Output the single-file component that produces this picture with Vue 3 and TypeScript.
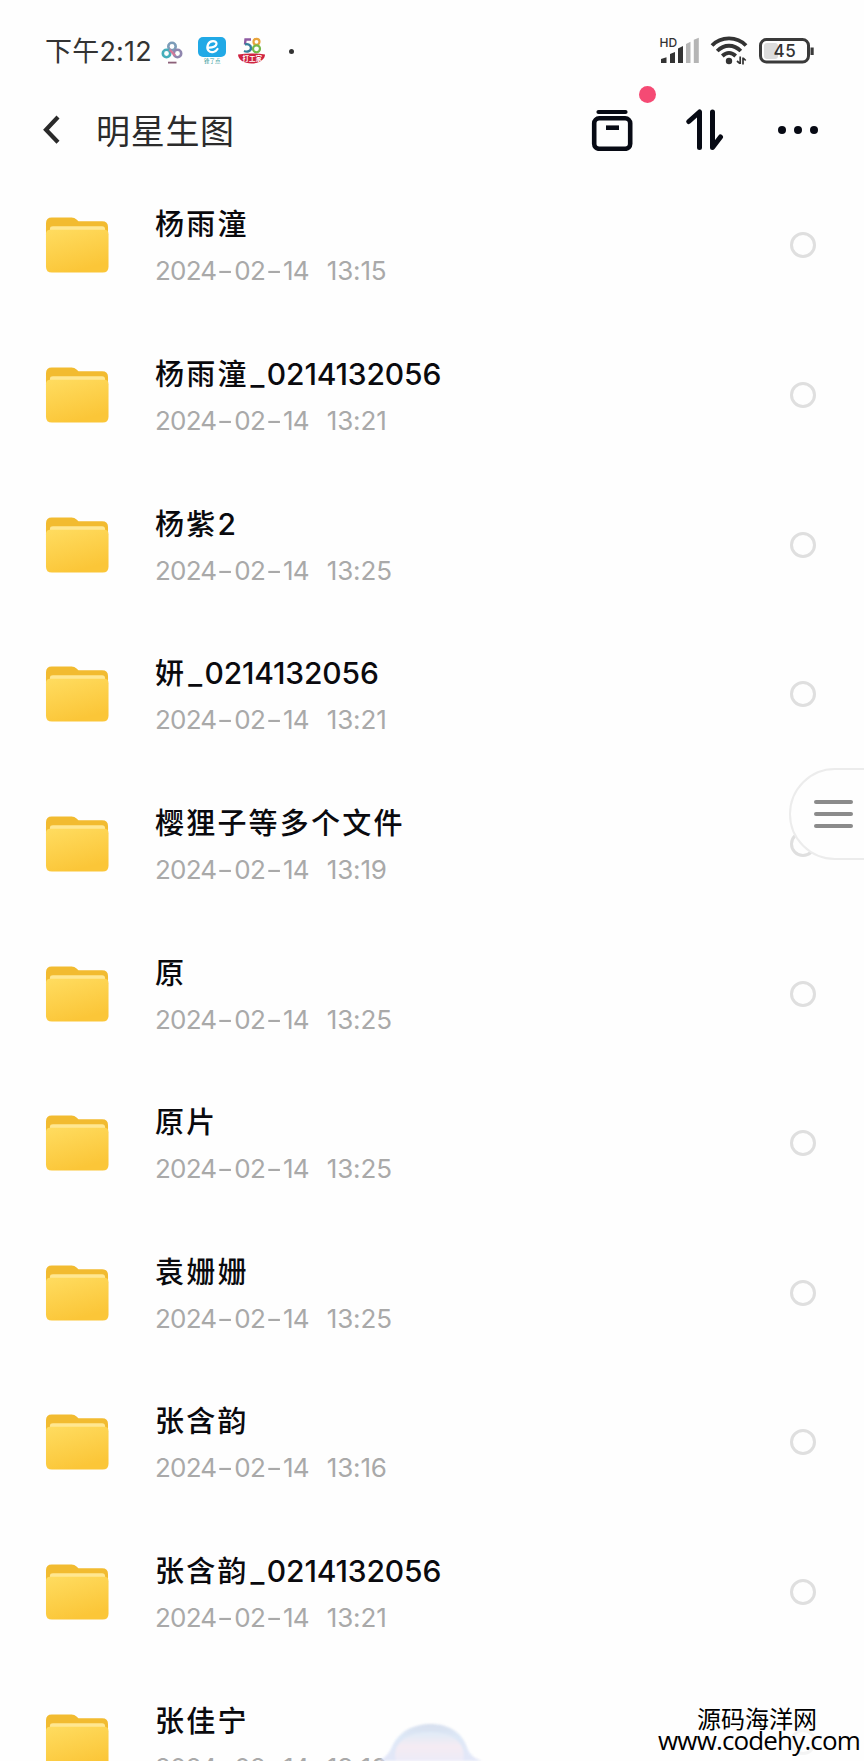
<script setup lang="ts">
interface Entry {
  name: string
  serial?: string
  digits?: string
  time: string
}

const day = ['2024', '-', '02', '-', '14']

const entries: Entry[] = [
  { name: '杨雨潼', time: '13:15' },
  { name: '杨雨潼', serial: '0214132056', time: '13:21' },
  { name: '杨紫', digits: '2', time: '13:25' },
  { name: '妍', serial: '0214132056', time: '13:21' },
  { name: '樱狸子等多个文件', time: '13:19' },
  { name: '原', time: '13:25' },
  { name: '原片', time: '13:25' },
  { name: '袁姗姗', time: '13:25' },
  { name: '张含韵', time: '13:16' },
  { name: '张含韵', serial: '0214132056', time: '13:21' },
  { name: '张佳宁', time: '13:16' },
]
</script>

<template>
  <div class="screen">
    <svg class="defs" width="0" height="0" aria-hidden="true">
      <defs>
        <linearGradient id="folderFront" x1="0" y1="0" x2="0.4" y2="1">
          <stop offset="0" stop-color="#ffdc60" />
          <stop offset="1" stop-color="#fbc638" />
        </linearGradient>
        <linearGradient id="orb" x1="0" y1="0" x2="0" y2="1">
          <stop offset="0" stop-color="#d3dced" />
          <stop offset="0.35" stop-color="#dae6f6" />
          <stop offset="1" stop-color="#e1e5f8" />
        </linearGradient>
        <linearGradient id="orbGlow" x1="0" y1="0" x2="0" y2="1">
          <stop offset="0" stop-color="#dde9f8" />
          <stop offset="0.5" stop-color="#f4e9f2" />
          <stop offset="1" stop-color="#ebe9f8" />
        </linearGradient>
      </defs>
    </svg>

    <header class="status">
      <span class="clock"><span class="clock-cn">下午</span>2:12</span>
      <svg class="app-cloud" width="22" height="24" viewBox="0 0 22 24" fill="none">
        <circle cx="11" cy="6.5" r="3.700" stroke="#7c9cb8" stroke-width="2.600" />
        <circle cx="5.500" cy="13.500" r="3.700" stroke="#45aebb" stroke-width="2.600" />
        <circle cx="16.500" cy="13.500" r="3.700" stroke="#8f86ae" stroke-width="2.600" />
        <path d="M8.500 9.500l5.500 6" stroke="#d4789a" stroke-width="2.400" />
        <path d="M7 22.600h8.500" stroke="#8c6079" stroke-width="1.800" />
      </svg>
      <svg class="app-e" width="30" height="28" viewBox="0 0 30 28" fill="none">
        <rect x="1" y="1" width="28" height="20" rx="5" fill="#21a9e6" />
        <path d="M10.500 11.500c5 .6 9-1.200 9-4 0-3-6.500-3.500-8.500 1-2.200 5.200 1.500 8.500 5.500 7.500 1.800-.4 3.200-1.600 4-3" stroke="#fff" stroke-width="2.200" stroke-linecap="round" />
        <text x="7" y="26.500" class="e-label">锋了点</text>
      </svg>
      <svg class="app-58" width="30" height="30" viewBox="0 0 30 30" fill="none">
        <path d="M14 3.500H8.500L8 8.500" stroke="#8e5aa2" stroke-width="2.400" />
        <path d="M8 8.500c3-1 6 .5 6 3.500s-3.500 4.500-7 3" stroke="#377f9c" stroke-width="2.400" />
        <circle cx="19.500" cy="5.800" r="3" stroke="#e9a43b" stroke-width="2.200" />
        <circle cx="19.500" cy="12.800" r="3.500" stroke="#76b84a" stroke-width="2.200" />
        <path d="M1 18.500q13.500-2 27 0c0 5-6 9-13.500 9S1 23.500 1 18.500z" fill="#cf2340" />
        <text x="5.500" y="24.800" class="work-label">打工家</text>
      </svg>
      <span class="more-dot"></span>
      <span class="spacer"></span>
      <svg class="signal" width="42" height="30" viewBox="0 0 42 30">
        <text x="0.500" y="11" class="hd">HD</text>
        <path d="M2 23l5.500-1.800V27H2z" fill="#333" />
        <path d="M11 18l5-2V27h-5z" fill="#333" />
        <path d="M19 12.500l5-2.500v17h-5z" fill="#333" />
        <path d="M27 8l4.500-2.200V27H27z" fill="#b5b5b5" />
        <path d="M34.800 3.800l5-2V27h-5z" fill="#b5b5b5" />
      </svg>
      <svg class="wifi" width="38" height="30" viewBox="0 0 38 30" fill="none" stroke="#333" stroke-width="3.800">
        <path d="M2 9.500C11 0 27 0 36 9.500" />
        <path d="M7.200 15c7-7 16.600-7 23.600 0" />
        <path d="M12.300 20c4.200-4 9.200-4 13.400 0" />
        <circle cx="19" cy="25" r="3.200" fill="#333" stroke="none" />
        <path d="M30.200 20.500V28M27 25l3 2.700M33 28.500v-7M33.200 22l2.500 2.500" stroke-width="1.700" />
      </svg>
      <svg class="battery" width="56" height="26" viewBox="0 0 56 26">
        <rect x="5" y="5" width="14" height="16" rx="3" fill="#dcdcdc" />
        <rect x="1.500" y="1.500" width="48" height="22.500" rx="6" fill="none" stroke="#3a3a3a" stroke-width="3" />
        <path d="M51.500 9.500h3.200v7.500h-3.200z" fill="#3a3a3a" />
        <text x="14.500" y="19.200" class="level">45</text>
      </svg>
    </header>

    <nav class="bar">
      <svg class="back" width="20" height="32" viewBox="0 0 20 32" fill="none">
        <path d="M17 3L5 15.700l12 12.500" stroke="#2a2a2a" stroke-width="4.200" />
      </svg>
      <h1 class="title">明星生图</h1>
      <span class="spacer"></span>
      <span class="box-wrap">
        <svg width="42" height="42" viewBox="0 0 42 42" fill="none" stroke="#070a14">
          <path d="M7.500 3H34.500" stroke-width="4.200" stroke-linecap="round" />
          <rect x="3.200" y="9.300" width="36" height="30.500" rx="5" stroke-width="4.600" />
          <path d="M15 18.700h13" stroke-width="4.600" />
        </svg>
        <i class="badge"></i>
      </span>
      <svg class="sort" width="38" height="42" viewBox="0 0 38 42" fill="none" stroke="#070a14" stroke-width="5" stroke-linecap="round" stroke-linejoin="round">
        <path d="M2.800 12.500L13.500 3V38.500" />
        <path d="M26.500 3V38.500l8-10.500" />
      </svg>
      <span class="dots"><i></i><i></i><i></i></span>
    </nav>

    <main class="list">
      <section v-for="(entry, i) in entries" :key="i" class="row">
        <svg class="folder" width="65" height="58" viewBox="0 0 66 58">
          <path d="M1 10V7q0-6 6-6h20q3 0 5 2l2 2h24q6 0 6 6v20H1z" fill="#f2bb30" />
          <path d="M5 12.500q0-2.500 3-2.500h50q3 0 3 3v4H5z" fill="#ffe791" />
          <path d="M1 18q0-4.500 4.500-4.500H60q4.500 0 4.500 4.500v33q0 6-6 6H7q-6 0-6-6z" fill="url(#folderFront)" />
        </svg>
        <div class="info">
          <div class="name">{{ entry.name }}<span v-if="entry.digits" class="latin">{{ entry.digits }}</span><span v-if="entry.serial" class="latin serial"><span class="joiner">_</span>{{ entry.serial }}</span></div>
          <div class="date">
            <span v-for="(part, p) in day" :key="p" :class="part === '-' ? 'dash' : 'num'">{{ part }}</span>
            <span class="time">{{ entry.time }}</span>
          </div>
        </div>
        <span class="radio" :class="{ faint: i === entries.length - 1 }"></span>
      </section>
    </main>

    <div class="drawer"><i></i><i></i><i></i></div>

    <svg class="orb" width="110" height="38" viewBox="0 0 110 38">
      <path d="M0 38q8-3 13-12C20 8 36 1 53 1s32 8 37 26q4 8 14 11z" fill="url(#orb)" />
      <path d="M18 38C13 20 30 9 52 9s37 11 33 29z" fill="url(#orbGlow)" />
    </svg>

    <footer class="mark">
      <div class="mark-cn">源码海洋网</div>
      <div class="mark-url">www.codehy.com</div>
    </footer>
  </div>
</template>

<style>
body {
  background: #fefefe;
}
</style>

<style scoped>
.screen {
  position: relative;
  width: 864px;
  height: 1761px;
  overflow: hidden;
  background: #fefefe;
  font-family: Inter, "Noto Sans CJK SC", sans-serif;
}
.defs {
  position: absolute;
}
.spacer {
  flex: 1;
}
.status {
  display: flex;
  align-items: center;
  height: 100px;
  padding: 0 49px 0 45px;
  box-sizing: border-box;
}
.clock {
  width: 106px;
  margin-top: -1px;
  font-size: 27px;
  letter-spacing: 0.2px;
  color: #333;
  white-space: nowrap;
}
.clock-cn {
  font-family: "Noto Sans CJK SC", sans-serif;
  font-size: 27px;
}
.app-cloud {
  margin: 4px 0 0 10px;
}
.app-e {
  margin-left: 14px;
}
.e-label {
  font: 5.5px "Noto Sans CJK SC", sans-serif;
  fill: #389b9b;
}
.app-58 {
  margin: 2px 0 0 10px;
}
.work-label {
  font: bold 6.5px "Noto Sans CJK SC", sans-serif;
  fill: #fff;
}
.more-dot {
  width: 5px;
  height: 5px;
  margin: 2px 0 0 22px;
  border-radius: 50%;
  background: #333;
}
.signal {
  margin-top: 2px;
}
.hd {
  font: 500 12px Inter, sans-serif;
  fill: #333;
}
.wifi {
  margin: 2px 0 0 9px;
}
.battery {
  margin: 1px 0 0 11px;
}
.level {
  font: 500 17px Inter, sans-serif;
  letter-spacing: 0.5px;
  fill: #333;
}
.bar {
  display: flex;
  align-items: center;
  height: 60px;
  padding: 0 46px 0 41px;
}
.title {
  margin: -1px 0 0 35px;
  font: 400 34px/60px "Noto Sans CJK SC", sans-serif;
  letter-spacing: 0.7px;
  color: #2b2b2b;
}
.box-wrap {
  position: relative;
  height: 42px;
}
.badge {
  position: absolute;
  top: -23.5px;
  left: 47.5px;
  width: 17px;
  height: 17px;
  border-radius: 50%;
  background: #f54a74;
}
.sort {
  margin-left: 53px;
}
.dots {
  display: flex;
  gap: 7.5px;
  margin-left: 53.5px;
}
.dots i {
  width: 8.5px;
  height: 8.5px;
  border-radius: 50%;
  background: #070a14;
}
.list {
  padding-top: 10.5px;
}
.row {
  display: flex;
  align-items: center;
  height: 149.65px;
  padding: 0 48px 0 45px;
}
.folder {
  flex: none;
}
.info {
  flex: 1;
  margin: 4px 0 0 45px;
}
.name {
  height: 48px;
  font: 500 29px/46px "Noto Sans CJK SC", sans-serif;
  letter-spacing: 2.2px;
  color: #0a0a0e;
}
.latin {
  font-family: Inter, sans-serif;
  font-size: 30px;
  line-height: 1;
  letter-spacing: 0.1px;
}
.serial {
  letter-spacing: -0.15px;
}
.joiner {
  margin: 0 2.5px 0 2px;
}
.date {
  display: flex;
  height: 48px;
  font: 400 26px/48px Inter, sans-serif;
  letter-spacing: -0.8px;
  color: #a9a9a9;
}
.dash {
  width: 17px;
  margin: 0 1px 0 0;
  text-align: center;
  transform: scaleX(1.4);
}
.time {
  margin-left: 18px;
  letter-spacing: -0.15px;
}
.radio {
  width: 20px;
  height: 20px;
  border: 3px solid #dfdfdf;
  border-radius: 50%;
}
.faint {
  opacity: 0.3;
}
.drawer {
  position: absolute;
  top: 768px;
  right: -20px;
  display: flex;
  flex-direction: column;
  justify-content: center;
  gap: 7.5px;
  width: 95px;
  height: 92px;
  padding-left: 23px;
  box-sizing: border-box;
  border: 2px solid #ececec;
  border-radius: 46px 0 0 46px;
  background: #fefefe;
}
.drawer i {
  width: 39px;
  height: 4.5px;
  border-radius: 2px;
  background: #8b8b8b;
}
.orb {
  position: absolute;
  left: 378px;
  bottom: 0;
  opacity: 0.9;
  filter: blur(1px);
}
.mark {
  position: absolute;
  right: 4px;
  bottom: 9px;
  color: #000;
}
.mark-cn {
  margin-left: 39px;
  font: 400 24px/22px "Noto Sans CJK SC", sans-serif;
}
.mark-url {
  font: 400 26px/23px "Open Sans", sans-serif;
  letter-spacing: -0.85px;
}
</style>
